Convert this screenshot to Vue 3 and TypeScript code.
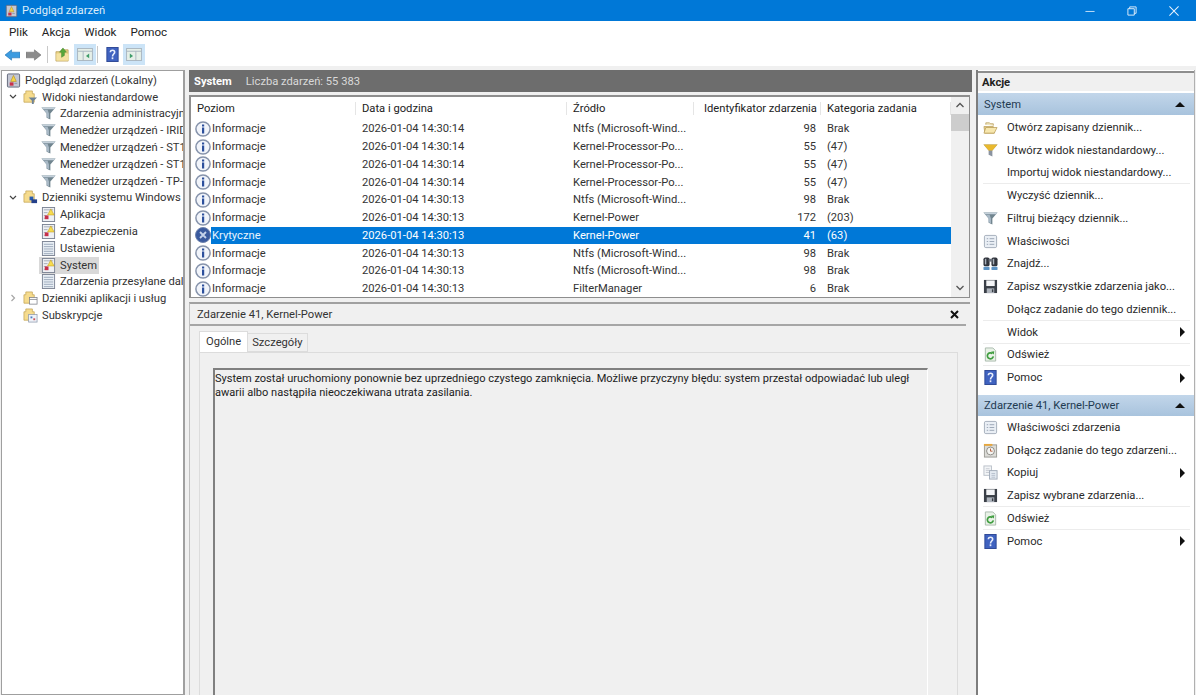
<script setup lang="ts">
/**
 * Podgląd zdarzeń - main window
 */
interface TreeRow {
  label: string
  level: number
  icon: string
  chevron?: 'open' | 'closed'
  selected?: boolean
}

interface EventRow {
  level: string
  date: string
  source: string
  id: number
  category: string
  critical?: boolean
}

interface ActionRow {
  label: string
  icon?: string
  more?: boolean
  divider?: boolean
}

const menus = ['Plik', 'Akcja', 'Widok', 'Pomoc']

const tree: TreeRow[] = [
  { label: 'Podgląd zdarzeń (Lokalny)', level: 0, icon: 'i-viewer' },
  { label: 'Widoki niestandardowe', level: 1, icon: 'i-folder-filter', chevron: 'open' },
  { label: 'Zdarzenia administracyjne', level: 2, icon: 'i-funnel' },
  { label: 'Menedżer urządzeń - IRIDIUM', level: 2, icon: 'i-funnel' },
  { label: 'Menedżer urządzeń - ST1000', level: 2, icon: 'i-funnel' },
  { label: 'Menedżer urządzeń - ST1000', level: 2, icon: 'i-funnel' },
  { label: 'Menedżer urządzeń - TP-Link', level: 2, icon: 'i-funnel' },
  { label: 'Dzienniki systemu Windows', level: 1, icon: 'i-folder-win', chevron: 'open' },
  { label: 'Aplikacja', level: 2, icon: 'i-log-alert' },
  { label: 'Zabezpieczenia', level: 2, icon: 'i-log-alert' },
  { label: 'Ustawienia', level: 2, icon: 'i-log' },
  { label: 'System', level: 2, icon: 'i-log-alert', selected: true },
  { label: 'Zdarzenia przesyłane dalej', level: 2, icon: 'i-log' },
  { label: 'Dzienniki aplikacji i usług', level: 1, icon: 'i-folder-doc', chevron: 'closed' },
  { label: 'Subskrypcje', level: 1, icon: 'i-folder-sub' }
]

const info = (date: string, source: string, id: number, category: string): EventRow => ({
  level: 'Informacje', date, source, id, category
})
const ntfs = 'Ntfs (Microsoft-Wind...'
const cpu = 'Kernel-Processor-Po...'

const events: EventRow[] = [
  info('2026-01-04 14:30:14', ntfs, 98, 'Brak'),
  info('2026-01-04 14:30:14', cpu, 55, '(47)'),
  info('2026-01-04 14:30:14', cpu, 55, '(47)'),
  info('2026-01-04 14:30:14', cpu, 55, '(47)'),
  info('2026-01-04 14:30:13', ntfs, 98, 'Brak'),
  info('2026-01-04 14:30:13', 'Kernel-Power', 172, '(203)'),
  { level: 'Krytyczne', date: '2026-01-04 14:30:13', source: 'Kernel-Power', id: 41, category: '(63)', critical: true },
  info('2026-01-04 14:30:13', ntfs, 98, 'Brak'),
  info('2026-01-04 14:30:13', ntfs, 98, 'Brak'),
  info('2026-01-04 14:30:13', 'FilterManager', 6, 'Brak'),
  info('2026-01-04 14:30:13', ntfs, 98, 'Brak')
]

const systemActions: ActionRow[] = [
  { label: 'Otwórz zapisany dziennik...', icon: 'i-open' },
  { label: 'Utwórz widok niestandardowy...', icon: 'i-funnel-gold' },
  { label: 'Importuj widok niestandardowy...', divider: true },
  { label: 'Wyczyść dziennik...' },
  { label: 'Filtruj bieżący dziennik...', icon: 'i-funnel' },
  { label: 'Właściwości', icon: 'i-props' },
  { label: 'Znajdź...', icon: 'i-binoculars' },
  { label: 'Zapisz wszystkie zdarzenia jako...', icon: 'i-save' },
  { label: 'Dołącz zadanie do tego dziennik...', divider: true },
  { label: 'Widok', more: true, divider: true },
  { label: 'Odśwież', icon: 'i-refresh', divider: true },
  { label: 'Pomoc', icon: 'i-help', more: true }
]

const eventActions: ActionRow[] = [
  { label: 'Właściwości zdarzenia', icon: 'i-props' },
  { label: 'Dołącz zadanie do tego zdarzeni...', icon: 'i-task' },
  { label: 'Kopiuj', icon: 'i-copy', more: true },
  { label: 'Zapisz wybrane zdarzenia...', icon: 'i-save', divider: true },
  { label: 'Odśwież', icon: 'i-refresh', divider: true },
  { label: 'Pomoc', icon: 'i-help', more: true }
]

const sections = [
  { title: 'System', rows: systemActions },
  { title: 'Zdarzenie 41, Kernel-Power', rows: eventActions }
]
</script>

<template>
  <div class="window">
    <!-- icon sprite -->
    <svg class="sprite" xmlns="http://www.w3.org/2000/svg">
      <symbol id="i-viewer" viewBox="0 0 16 16">
        <rect x="1.500" y="1" width="13" height="14" rx="1" fill="#c3c7d3" stroke="#5f6579" />
        <path d="M5 9 8 2.500 11 9z" fill="#f5d547" stroke="#b08a1c" stroke-width=".6" />
        <rect x="4" y="10" width="4" height="3.500" fill="#c8324a" />
        <rect x="9" y="10.500" width="3" height="1" fill="#8a93a8" />
      </symbol>
      <symbol id="i-folder-up" viewBox="0 0 16 16">
        <path d="M1 5h5l1-2h7v12H1z" fill="#ecd486" stroke="#b89c58" stroke-width=".8" />
        <path d="M1.500 7h13v7.500h-13z" fill="#f5e2a2" />
        <path d="M7 11V5.500H4.800L8.500 1l3.700 4.500H10V9z" fill="#58a83c" stroke="#3e8027" stroke-width=".5" />
      </symbol>
      <symbol id="i-folder-filter" viewBox="0 0 16 16">
        <path d="M1 4h2V1h7v3h2v9H1z" fill="#f6dc8e" stroke="#c4a657" stroke-width=".8" />
        <path d="M6 8h9l-3.500 3.500V15h-2v-3.500z" fill="#6f8396" />
      </symbol>
      <symbol id="i-folder-win" viewBox="0 0 16 16">
        <path d="M1 4h2V1h7v3h2v9H1z" fill="#f6dc8e" stroke="#c4a657" stroke-width=".8" />
        <rect x="7" y="7" width="4" height="4" fill="#2a5db0" />
        <rect x="9" y="10" width="6" height="4" fill="#24408a" />
      </symbol>
      <symbol id="i-folder-doc" viewBox="0 0 16 16">
        <path d="M1 4h2V1h7v3h2v9H1z" fill="#f6dc8e" stroke="#c4a657" stroke-width=".8" />
        <rect x="7" y="7" width="8" height="7" fill="#fff" stroke="#7b7f88" stroke-width=".8" />
        <path d="M7 9h8" stroke="#7b7f88" stroke-width=".8" />
      </symbol>
      <symbol id="i-folder-sub" viewBox="0 0 16 16">
        <path d="M1 4h2V1h7v3h2v9H1z" fill="#f6dc8e" stroke="#c4a657" stroke-width=".8" />
        <rect x="6" y="7" width="9" height="8" fill="#eef2f8" stroke="#8d99ad" stroke-width=".8" />
        <rect x="8" y="9" width="2" height="2" fill="#4c7dc4" />
        <rect x="11" y="11" width="2" height="2" fill="#c8545e" />
      </symbol>
      <symbol id="i-funnel" viewBox="0 0 16 16">
        <path d="M.5 1.500h15L10 8v6.500l-4-2V8z" fill="#71858f" />
        <path d="M.5 1.500h15L14 3.500H2z" fill="#c4d0da" />
        <path d="M3 4h4l1.500 4v5L6 12V8z" fill="#a9b9c6" />
      </symbol>
      <symbol id="i-funnel-gold" viewBox="0 0 16 16">
        <path d="M.5 1.500h15L10 8v6.500l-4-2V8z" fill="#8a93a0" />
        <path d="M.5 1.500h15L10 8H6z" fill="#e9b92e" />
      </symbol>
      <symbol id="i-log-alert" viewBox="0 0 16 16">
        <rect x="1.500" y=".5" width="13" height="15" fill="#eef0f4" stroke="#7c8494" />
        <path d="M3 3h10M3 6h4M3 9h3M3 12h3" stroke="#a4abb9" />
        <path d="M7 8.500 10.500 2 14 8.500z" fill="#f7dc4e" stroke="#c09c1f" stroke-width=".6" />
        <rect x="4" y="9" width="4" height="4" fill="#c7304a" />
      </symbol>
      <symbol id="i-log" viewBox="0 0 16 16">
        <rect x="1.500" y=".5" width="13" height="15" fill="#e9eff5" stroke="#7c8494" />
        <path d="M3 3.500h10M3 6h10M3 8.500h10M3 11h10M3 13.500h10" stroke="#9aa8ba" />
      </symbol>
      <symbol id="i-info" viewBox="0 0 16 16">
        <circle cx="8" cy="8" r="7.100" fill="#f1f4fa" stroke="#8693ab" stroke-width="1.500" />
        <rect x="7" y="6.500" width="2.200" height="6" fill="#2c4f9c" />
        <rect x="7" y="3.500" width="2.200" height="2" fill="#2c4f9c" />
      </symbol>
      <symbol id="i-crit" viewBox="0 0 16 16">
        <circle cx="8" cy="8" r="7.500" fill="#3a5a9e" stroke="#6f83ad" />
        <path d="m5 5 6 6m0-6-6 6" stroke="#c5d2ea" stroke-width="1.800" />
      </symbol>
      <symbol id="i-open" viewBox="0 0 16 16">
        <path d="M3 5V3h4l1 1h3v2" fill="#f0e6c0" stroke="#b89c58" stroke-width=".8" />
        <path d="M1 7h10l1 7H2z" fill="#eed78e" stroke="#b89c58" stroke-width=".8" />
        <path d="M3 8h12l-3 6H1z" fill="#f7e7ae" stroke="#b89c58" stroke-width=".8" />
      </symbol>
      <symbol id="i-props" viewBox="0 0 16 16">
        <rect x="1.500" y="1.500" width="13" height="13" rx="1.500" fill="#eaeff5" stroke="#a3adba" />
        <path d="M4 5h1.500M7 5h5M4 8h1.500M7 8h5M4 11h1.500M7 11h5" stroke="#9aa5b4" />
      </symbol>
      <symbol id="i-binoculars" viewBox="0 0 16 16">
        <rect x=".5" y="1.500" width="6.500" height="9.500" rx="2" fill="#30343c" />
        <rect x="9" y="1.500" width="6.500" height="9.500" rx="2" fill="#30343c" />
        <rect x="6" y="3" width="4" height="3" fill="#6c727c" />
        <rect x="2" y="3" width="1.500" height="6" fill="#a8b0ba" />
        <rect x="10.500" y="3" width="1.500" height="6" fill="#a8b0ba" />
        <rect x=".5" y="11.500" width="6.500" height="3.500" rx="1" fill="#5c93c4" />
        <rect x="9" y="11.500" width="6.500" height="3.500" rx="1" fill="#5c93c4" />
      </symbol>
      <symbol id="i-save" viewBox="0 0 16 16">
        <path d="M1 1h14v14H1z" fill="#3a3f47" />
        <rect x="3.500" y="1.500" width="9" height="6" fill="#f4f5f7" />
        <rect x="4" y="10" width="8" height="5" fill="#aeb4bc" />
        <rect x="9.500" y="11" width="1.500" height="3" fill="#3a3f47" />
      </symbol>
      <symbol id="i-refresh" viewBox="0 0 16 16">
        <path d="M2.500 1h8l3 3v11h-11z" fill="#e9f2e7" stroke="#a9baac" />
        <path d="M11 10a3.200 3.200 0 1 1-1-3" fill="none" stroke="#3f9d3f" stroke-width="1.800" />
        <path d="m8.500 5 3.500-.5-.5 3.500z" fill="#3f9d3f" />
      </symbol>
      <symbol id="i-help" viewBox="0 0 16 16">
        <rect x="2" y=".5" width="12" height="15" fill="#3f62c0" stroke="#2b4694" />
        <path d="M5.700 5.500C5.700 2.800 10.300 2.800 10.300 5.500 10.300 7.500 8 7.500 8 10" fill="none" stroke="#e8eefb" stroke-width="1.700" />
        <rect x="7.100" y="11" width="1.800" height="2" fill="#e8eefb" />
      </symbol>
      <symbol id="i-task" viewBox="0 0 16 16">
        <rect x="1.500" y="2" width="13" height="13" fill="#dcdcd8" stroke="#9b9b95" />
        <path d="M1 1h9v2H1z" fill="#e8a73c" />
        <circle cx="8" cy="8.500" r="4.200" fill="#f5f5f2" stroke="#8a8a84" />
        <path d="M8 6v2.700h2.200" fill="none" stroke="#b15a3a" />
      </symbol>
      <symbol id="i-copy" viewBox="0 0 16 16">
        <rect x="1" y="1" width="8" height="10" fill="#f3f5f7" stroke="#b9c0c8" />
        <path d="M3 4h4M3 6h4M3 8h4" stroke="#c4c9d0" />
        <rect x="7" y="6" width="8" height="9" fill="#e6ecf3" stroke="#a0aab8" />
        <path d="M9 9h4M9 11h4M9 13h4" stroke="#b3bdcb" />
      </symbol>
    </svg>

    <!-- title bar -->
    <header class="title-bar">
      <svg class="title-icon"><use href="#i-viewer" /></svg>
      <span class="title-text">Podgląd zdarzeń</span>
      <div class="window-buttons">
        <svg width="42" height="18" viewBox="0 0 46 18"><path d="M18 9.500h10" stroke="#cfe6fa" /></svg>
        <svg width="42" height="18" viewBox="0 0 46 18">
          <path d="M18.500 6.500h7v7h-7zM20.500 6.500v-2h7v7h-2" fill="none" stroke="#e8f3fd" />
        </svg>
        <svg width="42" height="18" viewBox="0 0 46 18"><path d="m18 4 10 10m0-10L18 14" stroke="#e8f3fd" stroke-width="1.100" /></svg>
      </div>
    </header>

    <!-- menu -->
    <nav class="menu-bar">
      <span v-for="menu in menus" :key="menu" class="menu-item">{{ menu }}</span>
    </nav>

    <!-- toolbar -->
    <div class="tool-bar">
      <svg class="tool-arrow" viewBox="0 0 16 12">
        <path d="M0 6 7 .5V3h9v6H7v2.500z" fill="#3c9be0" stroke="#1f6fb0" stroke-width=".6" />
      </svg>
      <svg class="tool-arrow" viewBox="0 0 16 12">
        <path d="M16 6 9 .5V3H0v6h9v2.500z" fill="#8c8c8c" stroke="#6c6c6c" stroke-width=".6" />
      </svg>
      <span class="tool-sep"></span>
      <svg class="tool-icon"><use href="#i-folder-up" /></svg>
      <button class="tool-toggle">
        <svg width="16" height="13" viewBox="0 0 17 14">
          <rect x=".5" y=".5" width="16" height="13" fill="#e6efe8" stroke="#a9b5bf" />
          <path d="M.5 3.500h16M6.500 3.500v10" stroke="#a9b5bf" />
          <path d="m13 6-3.500 2.500L13 11z" fill="#3f9d6a" />
        </svg>
      </button>
      <span class="tool-sep second"></span>
      <svg class="tool-icon help"><use href="#i-help" /></svg>
      <button class="tool-toggle">
        <svg width="16" height="13" viewBox="0 0 17 14">
          <rect x=".5" y=".5" width="16" height="13" fill="#e6efe8" stroke="#a9b5bf" />
          <path d="M.5 3.500h16M10.500 3.500v10" stroke="#a9b5bf" />
          <path d="m4 6 3.500 2.500L4 11z" fill="#3f9d6a" />
        </svg>
      </button>
    </div>

    <main class="panes">
      <!-- tree -->
      <aside class="tree">
        <div
          v-for="(row, index) in tree"
          :key="index"
          class="tree-row"
          :class="[`level-${row.level}`, { selected: row.selected }]"
        >
          <svg v-if="row.chevron" class="chevron" viewBox="0 0 8 8">
            <path v-if="row.chevron === 'open'" d="m1 2 3 3 3-3" fill="none" stroke="#444" stroke-width="1.200" />
            <path v-else d="m2.500 1 3 3-3 3" fill="none" stroke="#a6a6a6" stroke-width="1.200" />
          </svg>
          <svg class="tree-icon"><use :href="`#${row.icon}`" /></svg>
          <span class="tree-label">{{ row.label }}</span>
        </div>
      </aside>

      <!-- middle -->
      <section class="middle">
        <div class="log-head">
          <b>System</b>
          <span>Liczba zdarzeń: 55 383</span>
        </div>

        <div class="list">
          <div class="list-main">
            <div class="grid-row list-head">
              <span>Poziom</span>
              <span>Data i godzina</span>
              <span>Źródło</span>
              <span class="id-head">Identyfikator zdarzenia</span>
              <span>Kategoria zadania</span>
            </div>
            <div class="list-body">
              <div
                v-for="(ev, index) in events"
                :key="index"
                class="grid-row event"
                :class="{ critical: ev.critical }"
              >
                <span class="level-cell">
                  <svg class="event-icon"><use :href="ev.critical ? '#i-crit' : '#i-info'" /></svg>
                  {{ ev.level }}
                </span>
                <span>{{ ev.date }}</span>
                <span>{{ ev.source }}</span>
                <span class="id-cell">{{ ev.id }}</span>
                <span>{{ ev.category }}</span>
              </div>
            </div>
          </div>
          <div class="scrollbar">
            <svg viewBox="0 0 10 6" class="scroll-arrow"><path d="m1.500 5 3.500-3.500L8.500 5" fill="none" stroke="#555" stroke-width="1.300" /></svg>
            <div class="scroll-thumb"></div>
            <svg viewBox="0 0 10 6" class="scroll-arrow"><path d="m1.500 1 3.500 3.500L8.500 1" fill="none" stroke="#555" stroke-width="1.300" /></svg>
          </div>
        </div>

        <div class="detail">
          <div class="detail-head">
            <span>Zdarzenie 41, Kernel-Power</span>
            <svg width="9" height="9" viewBox="0 0 9 9"><path d="m1 1 7 7m0-7-7 7" stroke="#111" stroke-width="2" /></svg>
          </div>
          <div class="tabs">
            <span class="tab active">Ogólne</span>
            <span class="tab">Szczegóły</span>
          </div>
          <div class="tab-panel">
            <div class="message">
              System został uruchomiony ponownie bez uprzedniego czystego zamknięcia. Możliwe przyczyny błędu: system przestał odpowiadać lub uległ
              awarii albo nastąpiła nieoczekiwana utrata zasilania.
            </div>
          </div>
        </div>
      </section>

      <!-- actions -->
      <aside class="actions">
        <div class="actions-title">Akcje</div>
        <template v-for="section in sections" :key="section.title">
          <div class="section-head">
            <span>{{ section.title }}</span>
            <i class="tri-up"></i>
          </div>
          <div class="section-rows">
            <div
              v-for="row in section.rows"
              :key="row.label"
              class="action"
              :class="{ divider: row.divider }"
            >
              <span class="action-icon">
                <svg v-if="row.icon"><use :href="`#${row.icon}`" /></svg>
              </span>
              <span class="action-label">{{ row.label }}</span>
              <i v-if="row.more" class="tri-right"></i>
            </div>
          </div>
        </template>
      </aside>
    </main>
  </div>
</template>

<style>
html,
body {
  margin: 0;
  background: #fff;
  overflow: hidden;
}
</style>

<style scoped>
.window {
  width: 1196px;
  height: 695px;
  display: flex;
  flex-direction: column;
  overflow: hidden;
  background: #f0f0f0;
  font-family: Roboto, "Liberation Sans", sans-serif;
  font-size: 11.2px;
  color: #333;
}

.sprite {
  display: none;
}

/* title bar */
.title-bar {
  height: 21px;
  flex: none;
  display: flex;
  align-items: center;
  background: #0078d7;
  color: #dcedfb;
  padding-left: 5px;
}

.title-icon {
  width: 13px;
  height: 14px;
}

.title-text {
  margin-left: 4px;
}

.window-buttons {
  margin-left: auto;
  display: flex;
  padding-right: 1px;
}

/* menu */
.menu-bar {
  height: 22px;
  flex: none;
  display: flex;
  align-items: center;
  background: #fff;
  padding-left: 9px;
  gap: 14px;
  color: #222;
  font-size: 11.6px;
}

/* toolbar */
.tool-bar {
  height: 23px;
  flex: none;
  display: flex;
  align-items: center;
  background: #fff;
  padding-left: 5px;
}

.tool-arrow {
  width: 15px;
  height: 12px;
  margin-right: 6px;
}

.tool-sep {
  width: 1px;
  height: 17px;
  background: #c8c8c8;
}

.tool-sep.second {
  margin-left: 1px;
}

.tool-icon {
  width: 15px;
  height: 15px;
  margin: 0 4px 0 7px;
}

.tool-icon.help {
  margin: 0 3px 0 7px;
}

.tool-toggle {
  width: 22px;
  height: 21px;
  padding: 0;
  border: none;
  background: #cce4f7;
  display: flex;
  align-items: center;
  justify-content: center;
}

/* panes */
.panes {
  flex: 1;
  min-height: 0;
  display: flex;
  padding: 4px 0 0 1px;
  gap: 4px;
}

/* tree */
.tree {
  width: 181px;
  flex: none;
  background: #fff;
  border: 1px solid #9f9f9f;
  border-right-width: 2px;
  padding-top: 1px;
  overflow: hidden;
}

.tree-row {
  height: 16.8px;
  display: flex;
  align-items: center;
  white-space: nowrap;
  position: relative;
}

.level-0 {
  padding-left: 4px;
}

.level-1 {
  padding-left: 21px;
}

.level-2 {
  padding-left: 39px;
}

.tree-row.selected {
  width: fit-content;
  margin-left: 37px;
  padding: 0 2px;
  background: #d9d9d9;
}

.chevron {
  width: 8px;
  height: 8px;
  position: absolute;
  left: 7px;
  top: 4px;
}

.tree-icon {
  width: 15px;
  height: 15px;
  flex: none;
}

.tree-label {
  margin-left: 4px;
  line-height: 15px;
}

/* middle */
.middle {
  flex: 1;
  min-width: 0;
  display: flex;
  flex-direction: column;
}

.log-head {
  height: 22px;
  flex: none;
  display: flex;
  align-items: center;
  gap: 14px;
  background: #6d6d6d;
  color: #fff;
  padding-left: 5px;
}

.log-head span {
  color: #d9d9d9;
}

.list {
  flex: none;
  height: 203px;
  box-sizing: border-box;
  margin: 3px 2px 0 0;
  display: flex;
  background: #fff;
  border: 1px solid #8e8e8e;
  border-width: 2px 1px 1px 2px;
  overflow: hidden;
}

.list-main {
  flex: 1;
  min-width: 0;
}

.grid-row {
  display: grid;
  grid-template-columns: 165px 211px 127px 127px 1fr;
  align-items: center;
}

.grid-row > span {
  padding-left: 6px;
  white-space: nowrap;
}

.list-head {
  height: 23px;
}

.list-head > span {
  border-right: 1px solid #e5e5e5;
  color: #222;
}

.list-head > .id-head {
  padding-left: 10px;
}

.list-body {
  height: 180px;
  overflow: hidden;
}

.event {
  height: 17.75px;
}

.grid-row > .level-cell {
  display: flex;
  align-items: center;
  gap: 1px;
  padding-left: 4px;
}

.event-icon {
  width: 16px;
  height: 16px;
  flex: none;
}

.grid-row > .id-cell {
  text-align: right;
  padding-right: 5px;
}

.critical {
  color: #fff;
  background: linear-gradient(to right, #fff 20px, #0078d7 20px);
}

.critical .level-cell {
  color: #e8f3fd;
}

.scrollbar {
  width: 18px;
  flex: none;
  display: flex;
  flex-direction: column;
  background: #f0f0f0;
}

.scroll-arrow {
  width: 10px;
  height: 6px;
  margin: 5px auto 6px;
  flex: none;
}

.scroll-thumb {
  height: 17px;
  background: #cdcdcd;
}

.scroll-thumb + .scroll-arrow {
  margin-top: auto;
}

/* detail */
.detail {
  flex: 1;
  min-height: 0;
  margin-top: 4px;
  display: flex;
  flex-direction: column;
  border-top: 2px solid #a0a0a0;
  border-left: 1px solid #c0c0c0;
  margin-right: 2px;
}

.detail-head {
  height: 20px;
  flex: none;
  display: flex;
  align-items: center;
  justify-content: space-between;
  padding: 0 7px 0 7px;
  border-bottom: 2px solid #a6a6a6;
  margin-right: 4px;
}

.tabs {
  display: flex;
  margin: 5px 0 0 9px;
  height: 21px;
  align-items: flex-end;
}

.tab {
  height: 19px;
  line-height: 18px;
  padding: 0 4px;
  background: #f0f0f0;
  border: 1px solid #dcdcdc;
  border-left: none;
  box-sizing: border-box;
}

.tab.active {
  height: 21px;
  line-height: 20px;
  padding: 0 6px;
  background: #fff;
  border: 1px solid #dcdcdc;
  border-bottom: none;
}

.tab-panel {
  flex: 1;
  margin: 0 12px 0 9px;
  padding: 15px 29px 0 13px;
  border: 1px solid #dcdcdc;
  border-bottom: none;
}

.message {
  height: 100%;
  box-sizing: border-box;
  padding: 2px 0;
  border-top: 2px solid #808080;
  border-left: 2px solid #808080;
  border-right: 1px solid #fff;
  line-height: 14px;
  font-size: 11.05px;
  color: #222;
}

/* actions */
.actions {
  width: 216px;
  flex: none;
  background: #fff;
  border-left: 2px solid #7d7d7d;
  border-right: 1px solid #b0b0b0;
  padding-top: 1px;
  margin-right: 1px;
}

.actions-title {
  height: 20px;
  line-height: 19px;
  background: #f0f0f0;
  border-top: 2px solid #8e8e8e;
  box-sizing: border-box;
  font-weight: 700;
  color: #222;
  padding-left: 4px;
}

.section-head {
  height: 21px;
  display: flex;
  align-items: center;
  justify-content: space-between;
  padding: 0 9px 0 6px;
  background: linear-gradient(to bottom, #c2d6ea, #a8c3dd);
  color: #1f3b52;
}

.actions-title + .section-head {
  height: 22px;
  margin: 2px 0 1px;
}

.section-rows {
  padding-bottom: 6px;
}

.action {
  height: 22.75px;
  display: flex;
  align-items: center;
  padding-right: 9px;
  box-sizing: border-box;
  position: relative;
}

.action.divider::after {
  content: "";
  position: absolute;
  left: 5px;
  right: 4px;
  bottom: 0;
  height: 1px;
  background: #ececec;
}

.action-icon {
  width: 15px;
  height: 15px;
  flex: none;
  margin-left: 5px;
  margin-right: 9px;
}

.action-icon svg {
  width: 15px;
  height: 15px;
  display: block;
}

.action-label {
  flex: 1;
  white-space: nowrap;
  color: #2a2a2a;
}

.tri-up {
  width: 0;
  height: 0;
  border: 5px solid transparent;
  border-top: none;
  border-bottom: 5px solid #111;
}

.tri-right {
  width: 0;
  height: 0;
  border: 5px solid transparent;
  border-right: none;
  border-left: 5px solid #111;
}
</style>
